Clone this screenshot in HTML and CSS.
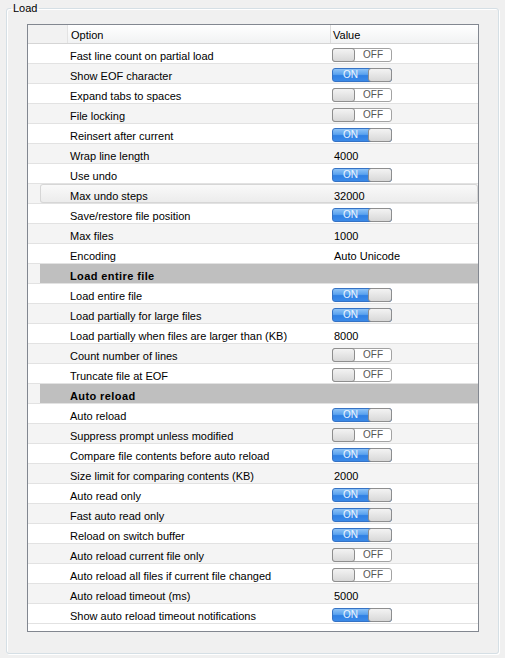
FILE: index.html
```html
<!DOCTYPE html>
<html>
<head>
<meta charset="utf-8">
<link rel="stylesheet" href="styles.css">
</head>
<body>
<fieldset class="group">
  <legend>Load</legend>
  <div class="grid">
    <div class="head">
      <span class="h-ind"></span>
      <span class="h-opt">Option</span>
      <span class="h-val">Value</span>
    </div>

    <div class="row"><span class="ind"></span><div class="body"><span class="name">Fast line count on partial load</span><span class="val"><span class="tg off"><span class="knob"></span><span class="lbl">OFF</span></span></span></div></div>
    <div class="row alt"><span class="ind"></span><div class="body"><span class="name">Show EOF character</span><span class="val"><span class="tg on"><span class="lbl">ON</span><span class="knob"></span></span></span></div></div>
    <div class="row"><span class="ind"></span><div class="body"><span class="name">Expand tabs to spaces</span><span class="val"><span class="tg off"><span class="knob"></span><span class="lbl">OFF</span></span></span></div></div>
    <div class="row alt"><span class="ind"></span><div class="body"><span class="name">File locking</span><span class="val"><span class="tg off"><span class="knob"></span><span class="lbl">OFF</span></span></span></div></div>
    <div class="row"><span class="ind"></span><div class="body"><span class="name">Reinsert after current</span><span class="val"><span class="tg on"><span class="lbl">ON</span><span class="knob"></span></span></span></div></div>
    <div class="row alt"><span class="ind"></span><div class="body"><span class="name">Wrap line length</span><span class="val"><span class="txt">4000</span></span></div></div>
    <div class="row"><span class="ind"></span><div class="body"><span class="name">Use undo</span><span class="val"><span class="tg on"><span class="lbl">ON</span><span class="knob"></span></span></span></div></div>
    <div class="row alt"><span class="ind"></span><div class="body sel"><span class="name">Max undo steps</span><span class="val"><span class="txt">32000</span></span></div></div>
    <div class="row"><span class="ind"></span><div class="body"><span class="name">Save/restore file position</span><span class="val"><span class="tg on"><span class="lbl">ON</span><span class="knob"></span></span></span></div></div>
    <div class="row alt"><span class="ind"></span><div class="body"><span class="name">Max files</span><span class="val"><span class="txt">1000</span></span></div></div>
    <div class="row"><span class="ind"></span><div class="body"><span class="name">Encoding</span><span class="val"><span class="txt">Auto Unicode</span></span></div></div>

    <div class="row alt"><span class="ind"></span><div class="body section"><span class="name">Load entire file</span></div></div>
    <div class="row"><span class="ind"></span><div class="body"><span class="name">Load entire file</span><span class="val"><span class="tg on"><span class="lbl">ON</span><span class="knob"></span></span></span></div></div>
    <div class="row alt"><span class="ind"></span><div class="body"><span class="name">Load partially for large files</span><span class="val"><span class="tg on"><span class="lbl">ON</span><span class="knob"></span></span></span></div></div>
    <div class="row"><span class="ind"></span><div class="body"><span class="name">Load partially when files are larger than (KB)</span><span class="val"><span class="txt">8000</span></span></div></div>
    <div class="row alt"><span class="ind"></span><div class="body"><span class="name">Count number of lines</span><span class="val"><span class="tg off"><span class="knob"></span><span class="lbl">OFF</span></span></span></div></div>
    <div class="row"><span class="ind"></span><div class="body"><span class="name">Truncate file at EOF</span><span class="val"><span class="tg off"><span class="knob"></span><span class="lbl">OFF</span></span></span></div></div>

    <div class="row alt"><span class="ind"></span><div class="body section"><span class="name">Auto reload</span></div></div>
    <div class="row"><span class="ind"></span><div class="body"><span class="name">Auto reload</span><span class="val"><span class="tg on"><span class="lbl">ON</span><span class="knob"></span></span></span></div></div>
    <div class="row alt"><span class="ind"></span><div class="body"><span class="name">Suppress prompt unless modified</span><span class="val"><span class="tg off"><span class="knob"></span><span class="lbl">OFF</span></span></span></div></div>
    <div class="row"><span class="ind"></span><div class="body"><span class="name">Compare file contents before auto reload</span><span class="val"><span class="tg on"><span class="lbl">ON</span><span class="knob"></span></span></span></div></div>
    <div class="row alt"><span class="ind"></span><div class="body"><span class="name">Size limit for comparing contents (KB)</span><span class="val"><span class="txt">2000</span></span></div></div>
    <div class="row"><span class="ind"></span><div class="body"><span class="name">Auto read only</span><span class="val"><span class="tg on"><span class="lbl">ON</span><span class="knob"></span></span></span></div></div>
    <div class="row alt"><span class="ind"></span><div class="body"><span class="name">Fast auto read only</span><span class="val"><span class="tg on"><span class="lbl">ON</span><span class="knob"></span></span></span></div></div>
    <div class="row"><span class="ind"></span><div class="body"><span class="name">Reload on switch buffer</span><span class="val"><span class="tg on"><span class="lbl">ON</span><span class="knob"></span></span></span></div></div>
    <div class="row alt"><span class="ind"></span><div class="body"><span class="name">Auto reload current file only</span><span class="val"><span class="tg off"><span class="knob"></span><span class="lbl">OFF</span></span></span></div></div>
    <div class="row"><span class="ind"></span><div class="body"><span class="name">Auto reload all files if current file changed</span><span class="val"><span class="tg off"><span class="knob"></span><span class="lbl">OFF</span></span></span></div></div>
    <div class="row alt"><span class="ind"></span><div class="body"><span class="name">Auto reload timeout (ms)</span><span class="val"><span class="txt">5000</span></span></div></div>
    <div class="row"><span class="ind"></span><div class="body"><span class="name">Show auto reload timeout notifications</span><span class="val"><span class="tg on"><span class="lbl">ON</span><span class="knob"></span></span></span></div></div>
  </div>
</fieldset>
</body>
</html>
```

FILE: styles.css
```css
html, body {
  margin: 0;
  padding: 0;
  background: #f0f0f0;
}
body {
  padding: 1px 6px 4px 6px;
  font-family: "Liberation Sans", Arial, sans-serif;
  font-size: 11px;
  color: #000;
}
.group {
  margin: 0;
  padding: 0;
  border: 1px solid #d5dfe5;
  border-radius: 3px;
  box-shadow: inset 1px 1px 0 #ffffff, 1px 1px 0 #ffffff;
  min-width: 0;
}
.group legend {
  margin-left: 4px;
  padding: 0 2px;
  line-height: 14px;
  font-size: 11px;
}
.grid {
  margin: 9px 19px 21px 20px;
  border: 1px solid #828790;
  background: #ffffff;
  padding-bottom: 7px;
}
.head {
  display: flex;
  height: 19px;
  box-sizing: border-box;
  border-bottom: 1px solid #d5d5d5;
  background: linear-gradient(#ffffff, #f1f2f3);
  line-height: 14px;
}
.h-ind {
  width: 40px;
  box-sizing: border-box;
  border-right: 1px solid #e3e3e3;
  background: #f2f2f2;
}
.h-opt {
  width: 263px;
  box-sizing: border-box;
  border-right: 1px solid #dcdcdc;
  padding: 3px 0 0 3px;
}
.h-val {
  flex: 1;
  padding: 3px 0 0 2px;
}
.row {
  display: flex;
  height: 20px;
  box-sizing: border-box;
  border-bottom: 1px solid #e2e2e2;
  background: #ffffff;
}
.row.alt {
  background: #f4f4f4;
}
.ind {
  width: 12px;
  flex: none;
}
.body {
  flex: 1;
  display: flex;
  min-width: 0;
}
.body.sel {
  background: linear-gradient(#fafafa, #ebebeb);
  box-shadow: inset 0 0 0 1px #d6d6d6;
  border-radius: 3px;
}
.body.section {
  background: #bfbfbf;
}
.body.section .name {
  font-weight: bold;
  letter-spacing: 0.4px;
}
.name {
  width: 291px;
  flex: none;
  box-sizing: border-box;
  padding: 5px 0 0 30px;
  line-height: 14px;
  white-space: nowrap;
}
.val {
  flex: 1;
  display: flex;
  align-items: flex-start;
  padding-left: 1px;
}
.txt {
  line-height: 14px;
  padding: 5px 0 0 2px;
}
.tg {
  margin-top: 4px;
  display: flex;
  width: 60px;
  height: 14px;
  box-sizing: border-box;
  border: 1px solid #a3a3a3;
  border-radius: 3px;
  background: #ffffff;
  font-size: 10px;
  line-height: 12px;
}
.tg .lbl {
  flex: 1;
  text-align: center;
}
.tg .knob {
  width: 23px;
  height: 14px;
  box-sizing: border-box;
  border: 1px solid #8e8e8e;
  border-radius: 3px;
  background: linear-gradient(#f3f3f3, #d8d8d8);
  flex: none;
}
.tg.off .knob {
  margin: -1px 0 -1px -1px;
}
.tg.off .lbl {
  color: #555555;
}
.tg.on {
  border-color: #3572c4;
  background: linear-gradient(#8ec3f7 0%, #5aa2ee 45%, #2f80e4 55%, #3b8ae8 100%);
}
.tg.on .lbl {
  color: #eef6ff;
}
.tg.on .knob {
  width: 24px;
  margin: -1px -1px -1px 0;
}
```
